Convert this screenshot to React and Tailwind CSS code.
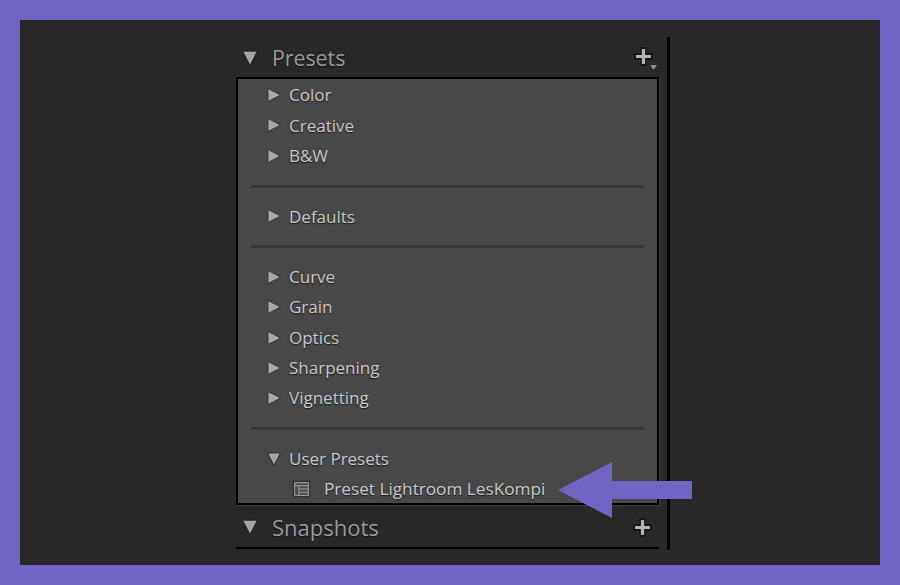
import React from 'react';

const groups = [
  ['Color', 'Creative', 'B&W'],
  ['Defaults'],
  ['Curve', 'Grain', 'Optics', 'Sharpening', 'Vignetting'],
];

function Triangle({ down, className }) {
  return (
    <svg className={className} viewBox="0 0 14 14" aria-hidden="true">
      {down ? (
        <polygon points="0.5,1 13.5,1 7,13.5" fill="#a3a3a3" stroke="#1c1c1c" strokeWidth="0.8" />
      ) : (
        <polygon points="1,0.5 13.5,7 1,13.5" fill="#a8a8a8" stroke="#2a2a2a" strokeWidth="0.8" />
      )}
    </svg>
  );
}

function Plus({ className }) {
  return (
    <svg className={className} viewBox="0 0 18 18" aria-hidden="true">
      <path d="M9 2v14M2 9h14" stroke="#151515" strokeWidth="6" strokeLinecap="round" />
      <path d="M9 2v14M2 9h14" stroke="#b4b4b4" strokeWidth="3" />
    </svg>
  );
}

function Row({ label, down }) {
  return (
    <div className="flex h-[30.3px] items-center pl-[29px]">
      <Triangle down={down} className="mr-[8px] h-[14px] w-[14px] shrink-0" />
      <span className="text-[17px] text-[#c9c9c9] [text-shadow:0_1px_1px_#1a1a1a]">{label}</span>
    </div>
  );
}

function Divider() {
  return <div className="mx-[13px] my-[13.65px] h-[3px] bg-[#383838]" />;
}

function Header({ title, titleSize, children }) {
  return (
    <div className="flex items-center justify-between pl-[6px] pr-[5px]">
      <div className="flex items-center">
        <Triangle down className="mr-[14px] h-[16px] w-[16px]" />
        <span className={`${titleSize} leading-none text-[#9a9a9a] [text-shadow:0_1px_1px_#111]`}>{title}</span>
      </div>
      {children}
    </div>
  );
}

export default function App() {
  return (
    <div className="h-[585px] w-[900px] overflow-hidden border-[20px] border-[#6f66c3] bg-[#282828] font-['Open_Sans','Noto_Sans',sans-serif]">
      <div className="relative ml-[216px] mt-[17px] flex h-[513px] w-[434px] flex-col border-r-[3px] border-black pr-[8px]">
        <div className="flex h-[40px] flex-col justify-center pt-[2px]">
          <Header title="Presets" titleSize="text-[21.3px]">
            <div className="relative mr-[-4px] mt-[2px] h-[24px] w-[24px]">
              <Plus className="absolute left-0 top-0 h-[19px] w-[19px]" />
              <svg className="absolute bottom-0 right-0 h-[7px] w-[9px]" viewBox="0 0 9 7" aria-hidden="true">
                <polygon points="1,1 8,1 4.5,6" fill="#8f8f8f" />
              </svg>
            </div>
          </Header>
        </div>

        <div className="h-[428px] border-2 border-black bg-[#484848] pt-[1.5px] shadow-[1px_1px_0_#3c3c3c]">
          {groups.map((rows) => (
            <div key={rows[0]}>
              {rows.map((r) => (
                <Row key={r} label={r} />
              ))}
              <Divider />
            </div>
          ))}
          <Row label="User Presets" down />
          <div className="flex h-[30.3px] items-center pl-[54px]">
            <svg className="mr-[13px] h-[18px] w-[19px] shrink-0" viewBox="0 0 18 17" aria-hidden="true">
              <rect x="0.5" y="0.5" width="17" height="16" rx="2" fill="#333" />
              <rect x="2.5" y="2.5" width="13" height="12" fill="#4a4a4a" stroke="#a0a0a0" />
              <path d="M2.5 5.5h13M6.5 5.5v9M6.5 8.5h9M6.5 11.5h9" stroke="#a0a0a0" fill="none" />
            </svg>
            <span className="text-[17.2px] text-[#c9c9c9] [text-shadow:0_1px_1px_#1a1a1a]">Preset Lightroom LesKompi</span>
          </div>
        </div>

        <div className="flex h-[43px] flex-col justify-center pt-[3px]">
          <Header title="Snapshots" titleSize="text-[22px]">
            <Plus className="mr-[2px] h-[19px] w-[19px]" />
          </Header>
        </div>
        <div className="h-[3px] border-t-2 border-black" />

        {/* callout arrow sits on top of the panel */}
        <svg className="absolute left-[322px] top-[425px] h-[56px] w-[134px]" viewBox="0 0 134 56" aria-hidden="true">
          <polygon points="0,28 54,0 54,19 134,19 134,37 54,37 54,56" fill="#6f66c3" />
        </svg>
      </div>
    </div>
  );
}
